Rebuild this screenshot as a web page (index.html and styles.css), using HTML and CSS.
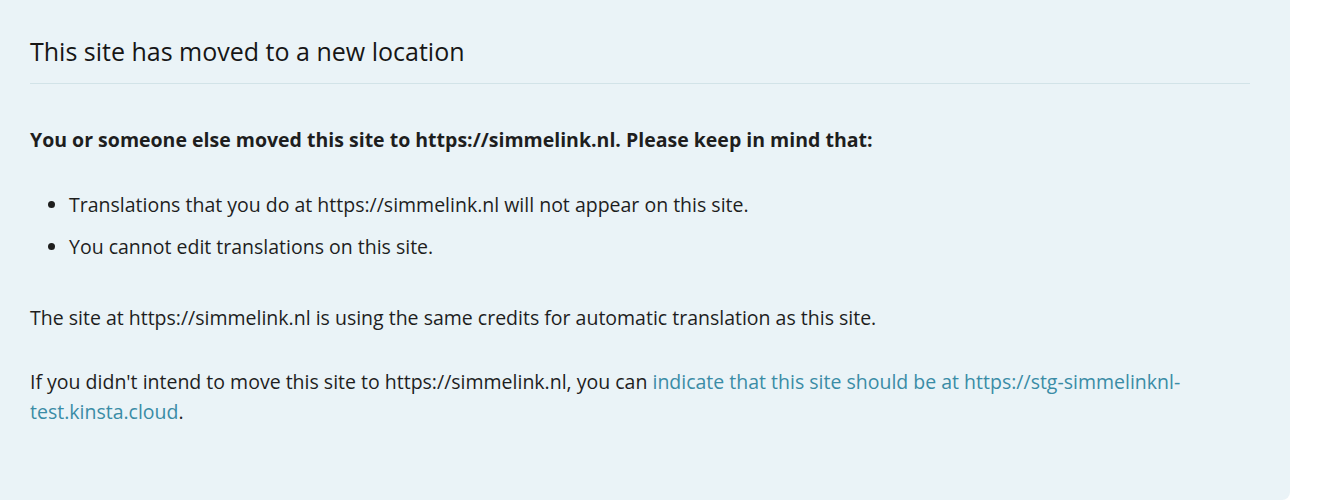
FILE: index.html
```html
<!DOCTYPE html>
<html>
<head>
<meta charset="utf-8">
<link rel="stylesheet" href="styles.css">
</head>
<body>
<div class="card">
  <h2 class="title">This site has moved to a new location</h2>
  <p class="lead">You or someone else moved this site to https://simmelink.nl. Please keep in mind that:</p>
  <ul class="list">
    <li>Translations that you do at https://simmelink.nl will not appear on this site.</li>
    <li>You cannot edit translations on this site.</li>
  </ul>
  <p class="para">The site at https://simmelink.nl is using the same credits for automatic translation as this site.</p>
  <p class="para">If you didn't intend to move this site to https://simmelink.nl, you can <a class="link" href="#">indicate that this site should be at https://stg-simmelinknl-test.kinsta.cloud</a>.</p>
</div>
</body>
</html>
```

FILE: styles.css
```css
html, body {
  margin: 0;
  padding: 0;
  background: #ffffff;
}
body {
  font-family: "Open Sans", "Noto Sans", sans-serif;
  color: #1e1e1e;
}
.card {
  width: 1290px;
  height: 500px;
  box-sizing: border-box;
  background: #eaf3f7;
  border-radius: 0 0 8px 0;
  padding: 32px 40px 0 30px;
}
.title {
  margin: 0;
  font-size: 25px;
  font-weight: 400;
  line-height: 38px;
  padding-bottom: 13px;
  border-bottom: 1px solid #d2e3e8;
  color: #161616;
}
.lead {
  margin: 41px 0 0;
  font-size: 19.5px;
  font-weight: 700;
  line-height: 30px;
}
.list {
  margin: 35px 0 0;
  padding-left: 39px;
  font-size: 19.5px;
  line-height: 30px;
}
.list li + li {
  margin-top: 12px;
}
.para {
  margin: 41px 0 0;
  font-size: 19.5px;
  line-height: 30px;
}
.para + .para {
  margin-top: 34px;
}
.link {
  color: #3a8ca6;
  text-decoration: none;
}
```
